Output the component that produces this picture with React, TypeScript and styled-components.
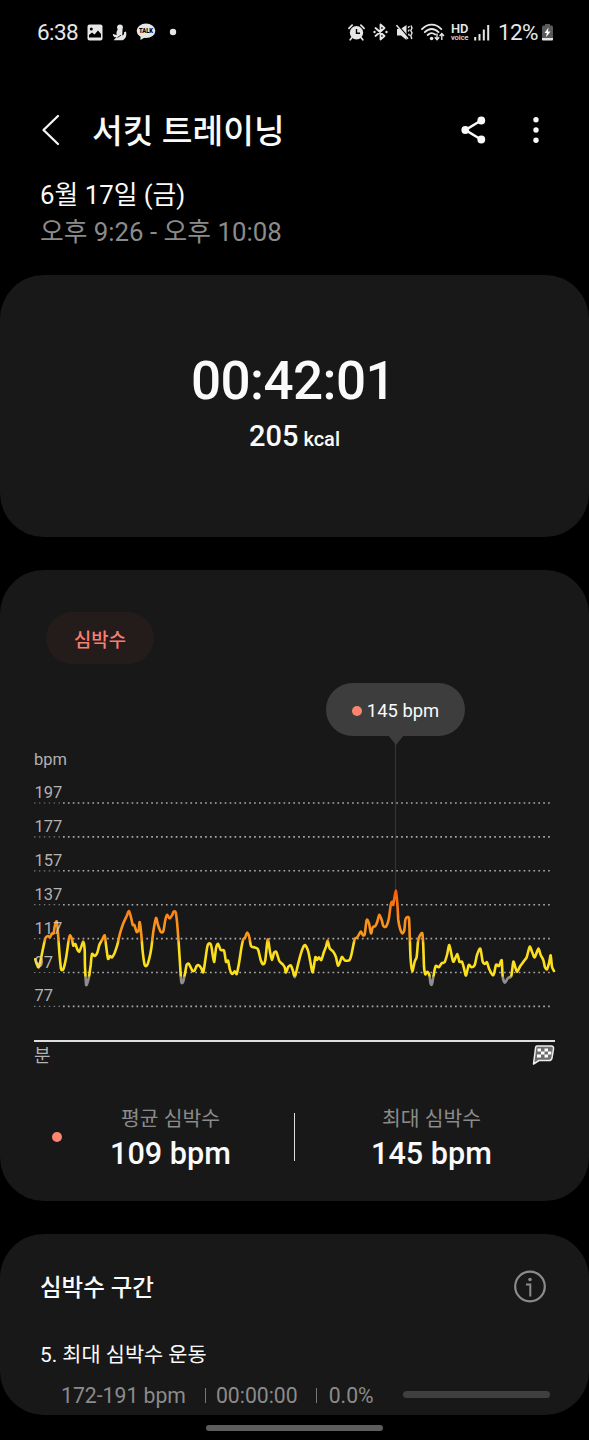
import React from "react";
import styled, { createGlobalStyle } from "styled-components";

const GlobalStyle = createGlobalStyle`
  * { box-sizing: border-box; }
  html, body { margin: 0; background: #000; }
  body { font-family: Roboto, "Noto Sans CJK KR", sans-serif; color: #fafafa; }
  svg { display: block; flex: none; }
`;

const Screen = styled.main`
  width: 589px;
  height: 1440px;
  overflow: hidden;
  background: #000;
  display: flex;
  flex-direction: column;
`;

const StatusBar = styled.header`
  height: 64px;
  padding: 0 36px 0 37px;
  display: flex;
  align-items: center;
  justify-content: space-between;
`;

const StatusGroup = styled.div<{ $gap: number }>`
  display: flex;
  align-items: center;
  gap: ${(p) => p.$gap}px;
`;

const StatusText = styled.span`
  font-size: 22.5px;
  line-height: 26px;
  color: #e6e6e6;
  letter-spacing: -0.6px;
`;

const HdVoice = styled.svg`
  margin: 0 -3px 0 -2px;
`;

const TitleBar = styled.div`
  height: 112px;
  padding: 20px 33px 0 41px;
  display: flex;
  align-items: center;
`;

const Title = styled.h1`
  margin: 0 auto 0 32px;
  padding-top: 4px;
  font-size: 33.4px;
  line-height: 40px;
  font-weight: 500;
  white-space: nowrap;
`;

const Actions = styled.div`
  display: flex;
  align-items: center;
  gap: 44px;
`;

const DateBlock = styled.div`
  height: 99px;
  padding: 1px 40px 0;
`;

const DateLine = styled.div<{ $muted?: boolean }>`
  font-size: 25.8px;
  line-height: 37px;
  color: ${(p) => (p.$muted ? "#8b8b8b" : "#fafafa")};
  white-space: nowrap;
`;

const Card = styled.section<{ $height: number }>`
  flex: none;
  height: ${(p) => p.$height}px;
  margin-bottom: 33px;
  border-radius: 44px;
  background: #181818;
  overflow: hidden;
`;

const SummaryCard = styled(Card)`
  display: flex;
  flex-direction: column;
  align-items: center;
  padding-top: 76px;
`;

const Duration = styled.div`
  font-size: 53px;
  line-height: 60px;
  font-weight: 500;
  letter-spacing: -0.6px;
  padding-right: 3px;
`;

const Calories = styled.div`
  margin-top: 7px;
  font-size: 29px;
  line-height: 36px;
  font-weight: 500;
`;

const Unit = styled.span`
  font-size: 20px;
  margin-left: 5px;
`;

const HeartCard = styled(Card)`
  display: flex;
  flex-direction: column;
`;

const Chip = styled.div`
  width: 108px;
  height: 52px;
  margin: 42px 0 0 46px;
  border-radius: 26px;
  background: #231c1b;
  color: #f77f6f;
  font-size: 18.8px;
  font-weight: 500;
  display: flex;
  align-items: center;
  justify-content: center;
`;

const Tooltip = styled.div`
  position: relative;
  width: 139px;
  height: 53px;
  margin: 19px 0 0 326px;
  border-radius: 27px;
  background: #3d3d3d;
  display: flex;
  align-items: center;
  justify-content: center;
  gap: 5px;
  font-size: 18.4px;
  padding-top: 2px;

  &::after {
    content: "";
    position: absolute;
    top: 52px;
    left: 62px;
    border: 8px solid transparent;
    border-top: 10px solid #3d3d3d;
    border-bottom: 0;
  }
`;

const Dot = styled.i`
  flex: none;
  width: 10px;
  height: 10px;
  border-radius: 50%;
  background: #fd8570;
`;

const ChartArea = styled.div`
  height: 341px;
  padding: 8px 0 0 34px;
`;

const Stats = styled.div`
  display: flex;
  align-items: center;
  height: 90px;
  margin-top: 15px;
  padding-left: 52px;
`;

const Stat = styled.div<{ $width: number; $gapAfter?: number }>`
  flex: none;
  width: ${(p) => p.$width}px;
  margin-right: ${(p) => p.$gapAfter ?? 0}px;
  padding-top: 3px;
  display: flex;
  flex-direction: column;
  align-items: center;
`;

const StatLabel = styled.span`
  font-size: 20.4px;
  line-height: 28px;
  color: #8b8b8b;
`;

const StatValue = styled.span`
  margin-top: 2px;
  font-size: 30.6px;
  line-height: 38px;
  font-weight: 500;
`;

const StatDivider = styled.i`
  flex: none;
  width: 1px;
  height: 48px;
  background: #dedede;
`;

const ZoneCard = styled(Card)`
  margin-bottom: 0;
  padding: 36px 39px 0 40px;
`;

const ZoneHeader = styled.div`
  display: flex;
  align-items: center;
  justify-content: space-between;
  height: 34px;
  padding-right: 4px;
`;

const ZoneTitle = styled.h2`
  margin: 0;
  padding-top: 2px;
  font-size: 23.5px;
  line-height: 34px;
  font-weight: 500;
`;

const ZoneName = styled.div`
  margin-top: 35px;
  font-size: 20.8px;
  line-height: 32px;
`;

const ZoneRow = styled.div`
  display: flex;
  align-items: center;
  height: 28px;
  margin-top: 11px;
  padding-left: 21px;
  font-size: 21.2px;
  line-height: 28px;
  color: #8b8b8b;
  white-space: nowrap;
`;

const ZoneDivider = styled.i<{ $left: number; $right: number }>`
  width: 1px;
  height: 15px;
  margin: 0 ${(p) => p.$right}px 2px ${(p) => p.$left}px;
  background: #777;
`;

const ZoneTrack = styled.i`
  width: 147px;
  height: 7px;
  margin: 0 0 3px auto;
  border-radius: 4px;
  background: #3f3f3f;
`;

const HomeHandle = styled.div`
  flex: none;
  width: 177px;
  height: 6px;
  margin: 10px auto 0;
  border-radius: 3px;
  background: #5d5d5d;
`;

const LIGHT = "#e6e6e6";

const GalleryIcon = () => (
  <svg width="16" height="17" viewBox="0 0 16 17">
    <rect x="0.5" y="0.5" width="15" height="16" rx="2" fill={LIGHT} />
    <circle cx="4.3" cy="5" r="1.5" fill="#000" />
    <path d="M2 13.5V11l3-2.5 2.5 2L11 6.5l3 3.5v3.5z" fill="#000" />
  </svg>
);

const FigureIcon = () => (
  <svg width="15" height="17" viewBox="0 0 15 17">
    <circle cx="8" cy="3.300" r="2.900" fill={LIGHT} />
    <path d="M6 5C4.300 7.500 4.200 9 4.800 11L0.800 10C0.800 12.500 2.500 13.500 4.500 13.300L1.500 16.300H10.500C13.800 14.800 15 11.500 14 7.500L12 8.200C12.300 10.300 11.500 11.300 10.300 11.500L10.500 5z" fill={LIGHT} />
    <path d="M5.500 13.500l3.500-2.300" stroke="#000" strokeWidth="0.800" />
  </svg>
);

const TalkIcon = () => (
  <svg width="20" height="18" viewBox="0 0 20 18">
    <ellipse cx="10" cy="7.800" rx="9.300" ry="7.300" fill={LIGHT} />
    <path d="M4.500 13v4l5-3z" fill={LIGHT} />
    <text x="10" y="10.400" textAnchor="middle" textLength="14" lengthAdjust="spacingAndGlyphs" fontSize="7" fontWeight="900" fill="#000">TALK</text>
  </svg>
);

const DotIcon = () => (
  <svg width="16" height="8" viewBox="0 0 16 8">
    <circle cx="8" cy="4" r="3.200" fill={LIGHT} />
  </svg>
);

const AlarmIcon = () => (
  <svg width="17" height="17" viewBox="0 0 17 17">
    <circle cx="8.500" cy="8.800" r="6.700" fill={LIGHT} />
    <path d="M0.900 4.300L4.100 1.200M16.100 4.300L12.900 1.200M4 13.500l-1.800 2.300M13 13.500l1.800 2.300" stroke={LIGHT} strokeWidth="1.700" strokeLinecap="round" />
    <path d="M8.500 5v4.200h3.500" fill="none" stroke="#000" strokeWidth="1.400" />
  </svg>
);

const BluetoothIcon = () => (
  <svg width="15" height="18" viewBox="0 0 15 18">
    <path d="M2.500 5l9 8L7.500 16.500V1.500L11.500 5l-9 8" fill="none" stroke={LIGHT} strokeWidth="1.800" strokeLinejoin="round" strokeLinecap="round" />
    <circle cx="1.500" cy="9" r="1.200" fill={LIGHT} />
    <circle cx="13.500" cy="9" r="1.200" fill={LIGHT} />
  </svg>
);

const MuteIcon = () => (
  <svg width="17" height="17" viewBox="0 0 17 17">
    <path d="M1 5h3.500L10.500 1v15l-5.500-4.500H1z" fill={LIGHT} />
    <path d="M1.500 0.800L12.500 13.500" stroke="#000" strokeWidth="1.300" />
    <path d="M0.500 1.200L12 14.800" stroke={LIGHT} strokeWidth="1.500" />
    <path d="M12 3.800l1.500-1.500 M12.300 7.500l1-2M12.500 9.800l1 2M15 1.500l1 2.500-1.200 2.500 1.200 2.500-1.200 2.500 1 3.500" fill="none" stroke={LIGHT} strokeWidth="1.400" />
  </svg>
);

const WifiIcon = () => (
  <svg width="24" height="18" viewBox="0 0 24 18">
    <path d="M1 6.200C6.500 0 14.800 0 20.300 6.200M3.800 9.200c4-4.300 9.700-4.300 13.700 0M6.700 12c2.300-2.300 5.200-2.300 7.500-.5" fill="none" stroke={LIGHT} strokeWidth="1.800" strokeLinecap="round" />
    <circle cx="10.600" cy="15.500" r="1.800" fill={LIGHT} />
    <path d="M16 10.500v6M13.800 14.300l2.200 2.400 2.200-2.400M20.800 17v-6.300M18.600 13l2.200-2.400L23 13" fill="none" stroke={LIGHT} strokeWidth="1.400" />
  </svg>
);

const HdVoiceIcon = () => (
  <HdVoice width="18" height="18" viewBox="0 0 18 18">
    <text x="0" y="9.500" textLength="17.500" lengthAdjust="spacingAndGlyphs" fontSize="12" fontWeight="600" fill={LIGHT}>HD</text>
    <text x="0" y="16.500" textLength="17.500" lengthAdjust="spacingAndGlyphs" fontSize="7.500" fontWeight="500" fill={LIGHT}>voice</text>
  </HdVoice>
);

const SignalIcon = () => (
  <svg width="16" height="17" viewBox="0 0 16 17">
    <path d="M1.200 16.500v-3.500M5.500 16.500v-6.500M9.800 16.500V5.500M14.200 16.500V1" stroke={LIGHT} strokeWidth="2" />
  </svg>
);

const BatteryIcon = () => (
  <svg width="11" height="17" viewBox="0 0 11 17">
    <path d="M3 0h5v1.500h1.500q1.500 0 1.500 1.500v11H0V3q0-1.500 1.500-1.500H3z" fill="#5a5a5a" />
    <path d="M0 14h11v1.500q0 1-1 1H1q-1 0-1-1z" fill={LIGHT} />
    <path d="M6.500 3.500L2.500 9h2.300L4 13.200 8.500 7.500H6z" fill="#fff" />
  </svg>
);

const BackIcon = () => (
  <svg width="19" height="32" viewBox="0 0 19 32">
    <path d="M17 2L2.500 16 17 30" fill="none" stroke="#f5f5f5" strokeWidth="2.300" strokeLinecap="round" strokeLinejoin="round" />
  </svg>
);

const ShareIcon = () => (
  <svg width="25" height="28" viewBox="0 0 25 28">
    <path d="M20 4.500L4.500 14 20 23.500" fill="none" stroke="#fafafa" strokeWidth="2.600" />
    <circle cx="20.300" cy="4.500" r="3.900" fill="#fafafa" />
    <circle cx="4.300" cy="14" r="3.900" fill="#fafafa" />
    <circle cx="20.300" cy="23.500" r="3.900" fill="#fafafa" />
  </svg>
);

const MoreIcon = () => (
  <svg width="26" height="28" viewBox="0 0 26 28">
    <circle cx="6" cy="3.700" r="2.700" fill="#fafafa" />
    <circle cx="6" cy="14" r="2.700" fill="#fafafa" />
    <circle cx="6" cy="24.300" r="2.700" fill="#fafafa" />
  </svg>
);

const InfoIcon = () => (
  <svg width="32" height="34" viewBox="0 0 32 34">
    <circle cx="16" cy="16.500" r="14.800" fill="none" stroke="#8b8b8b" strokeWidth="2.200" />
    <circle cx="16" cy="9.500" r="1.800" fill="#8b8b8b" />
    <path d="M12 14.500h4.300V26.500" fill="none" stroke="#8b8b8b" strokeWidth="2" />
  </svg>
);

/* Heart-rate samples as [x, y] on a grid three times finer than the plot. */
const samples: [number, number][] = [
  [46,238],[50,252],[56,262],[62,240],[68,210],[76,175],[84,168],[90,172],[96,160],[101,160],[104,140],[110,124],[114,160],[118,215],
  [123,266],[130,268],[138,235],[146,180],[150,166],[156,178],[160,197],[166,192],[172,208],[178,215],[184,200],[190,185],
  [194,210],[195,260],[198,312],[201,312],[207,290],[212,255],[216,222],[224,228],[232,218],[238,195],[246,180],[254,166],
  [258,195],[264,236],[270,228],[276,232],[284,218],[292,195],[300,160],[310,130],[320,108],[327,93],[333,112],[338,135],
  [343,135],[350,156],[356,150],[359,126],[364,165],[368,215],[374,255],[381,256],[388,235],[394,205],[400,155],[408,114],
  [414,135],[422,155],[430,154],[436,120],[442,104],[448,115],[456,106],[461,95],[467,97],[471,125],[476,190],[480,250],
  [484,306],[490,304],[496,275],[500,254],[507,252],[517,272],[524,271],[530,258],[537,256],[544,265],[550,277],[556,240],
  [562,200],[568,190],[574,198],[582,246],[588,205],[594,191],[602,210],[612,212],[618,245],[624,242],[630,270],[637,282],
  [644,274],[650,282],[656,255],[664,205],[670,178],[676,172],[681,158],[687,168],[693,198],[702,202],[714,208],[722,240],
  [730,253],[736,240],[743,178],[750,215],[756,240],[762,218],[769,216],[778,243],[788,253],[794,262],[798,278],[804,262],
  [812,256],[818,270],[824,292],[830,270],[840,230],[848,205],[855,195],[864,212],[871,245],[878,277],[886,232],[891,240],
  [897,232],[904,240],[912,215],[918,200],[923,182],[929,205],[940,215],[948,232],[954,257],[962,240],[966,230],[974,241],
  [988,241],[994,225],[1004,178],[1012,172],[1022,155],[1028,165],[1034,163],[1040,120],[1047,130],[1053,160],[1058,142],
  [1066,138],[1072,125],[1078,104],[1085,120],[1090,138],[1098,140],[1106,118],[1112,75],[1116,65],[1120,74],[1127,32],
  [1132,70],[1135,120],[1140,145],[1147,160],[1153,150],[1156,120],[1161,112],[1167,115],[1169,165],[1172,240],[1177,274],
  [1184,245],[1190,230],[1194,185],[1198,170],[1207,160],[1210,200],[1212,260],[1216,283],[1222,275],[1228,285],[1232,312],
  [1236,312],[1241,285],[1247,258],[1256,262],[1265,250],[1274,246],[1281,225],[1288,195],[1296,232],[1301,245],[1312,222],
  [1318,245],[1326,245],[1332,265],[1338,287],[1346,255],[1354,262],[1364,255],[1371,225],[1381,206],[1388,245],[1394,252],
  [1401,247],[1408,268],[1420,286],[1428,255],[1437,258],[1445,241],[1448,290],[1455,308],[1463,295],[1474,288],[1480,245],
  [1486,262],[1491,275],[1501,258],[1512,243],[1520,232],[1529,200],[1536,215],[1544,232],[1555,206],[1562,225],[1570,240],
  [1575,262],[1581,268],[1587,250],[1592,226],[1596,260],[1602,273],
];

const points = samples.map(([x, y]) => [x / 3 - 14, y / 3 + 136]);

const linePath = points.reduce((d, p, i) => {
  if (i === 0) return `M${p[0].toFixed(1)} ${p[1].toFixed(1)}`;
  const a = points[Math.max(0, i - 2)];
  const b = points[i - 1];
  const c = points[Math.min(points.length - 1, i + 1)];
  const k = 8;
  return `${d}C${[
    b[0] + (p[0] - a[0]) / k, b[1] + (p[1] - a[1]) / k,
    p[0] - (c[0] - b[0]) / k, p[1] - (c[1] - b[1]) / k,
    p[0], p[1],
  ].map((n) => n.toFixed(1)).join(" ")}`;
}, "");

const levels = [197, 177, 157, 137, 117, 97, 77];

const HeartChart = () => (
  <svg width="522" height="333" viewBox="0 0 522 333">
    <defs>
      <linearGradient id="bpm" gradientUnits="userSpaceOnUse" x1="0" y1="146" x2="0" y2="246">
        <stop offset="0" stopColor="#fb5a08" />
        <stop offset="0.15" stopColor="#fb7412" />
        <stop offset="0.3" stopColor="#f98f1c" />
        <stop offset="0.5" stopColor="#f99a1c" />
        <stop offset="0.53" stopColor="#fbdc1c" />
        <stop offset="0.86" stopColor="#fde21a" />
        <stop offset="0.87" stopColor="#8e8e8e" />
        <stop offset="1" stopColor="#8e8e8e" />
      </linearGradient>
    </defs>
    <path d="M361.500 0V146" stroke="#343434" strokeWidth="1.200" />
    {levels.map((level, i) => (
      <g key={level}>
        <path d={`M0 ${59 + i * 33.9}h28`} stroke="#777" strokeWidth="1.200" strokeDasharray="1.500 3.400" />
        <path d={`M29 ${59 + i * 33.9}h489`} stroke="#a8a8a8" strokeWidth="1.600" strokeDasharray="1.700 3.200" />
      </g>
    ))}
    <path d={linePath} fill="none" stroke="url(#bpm)" strokeWidth="2.600" strokeLinejoin="round" strokeLinecap="round" />
    <g fill="#d0d0d0" fillOpacity="0.85" fontSize="16.500">
      <text x="0" y="21">bpm</text>
      {levels.map((level, i) => (
        <text key={level} x="0.500" y={54 + i * 33.9}>{level}</text>
      ))}
      <text x="0" y="318" fontSize="18">분</text>
    </g>
    <path d="M0 297h521" stroke="#dedede" strokeWidth="2" />
    <g transform="translate(498 300.500)">
      <path d="M5 1.500h14q3 0 2.500 3l-1.500 9q-.5 2.500-3 2.500H7L1.500 19.500 3.500 4Q3.700 1.500 5 1.500z" fill="#6e6e6e" stroke="#ededed" strokeWidth="1.500" strokeLinejoin="round" />
      <path d="M5.500 4h3.500v3H5.500zM12.500 4H16v3h-3.500zM9 7h3.500v3H9zM16 7h3.300v3H16zM5 10h4v3H5zM12.500 10H16v3h-3.500z" fill="#fff" />
    </g>
  </svg>
);

export default function App() {
  return (
    <Screen>
      <GlobalStyle />
      <StatusBar>
        <StatusGroup $gap={9}>
          <StatusText>6:38</StatusText>
          <GalleryIcon />
          <FigureIcon />
          <TalkIcon />
          <DotIcon />
        </StatusGroup>
        <StatusGroup $gap={8}>
          <AlarmIcon />
          <BluetoothIcon />
          <MuteIcon />
          <WifiIcon />
          <HdVoiceIcon />
          <SignalIcon />
          <StatusGroup $gap={4}>
            <StatusText>12%</StatusText>
            <BatteryIcon />
          </StatusGroup>
        </StatusGroup>
      </StatusBar>

      <TitleBar>
        <BackIcon />
        <Title>서킷 트레이닝</Title>
        <Actions>
          <ShareIcon />
          <MoreIcon />
        </Actions>
      </TitleBar>

      <DateBlock>
        <DateLine>6월 17일 (금)</DateLine>
        <DateLine $muted>오후 9:26 - 오후 10:08</DateLine>
      </DateBlock>

      <SummaryCard $height={262}>
        <Duration>00:42:01</Duration>
        <Calories>205<Unit>kcal</Unit></Calories>
      </SummaryCard>

      <HeartCard $height={631}>
        <Chip>심박수</Chip>
        <Tooltip><Dot />145 bpm</Tooltip>
        <ChartArea><HeartChart /></ChartArea>
        <Stats>
          <Dot />
          <Stat $width={217} $gapAfter={15}>
            <StatLabel>평균 심박수</StatLabel>
            <StatValue>109 bpm</StatValue>
          </Stat>
          <StatDivider />
          <Stat $width={273}>
            <StatLabel>최대 심박수</StatLabel>
            <StatValue>145 bpm</StatValue>
          </Stat>
        </Stats>
      </HeartCard>

      <ZoneCard $height={181}>
        <ZoneHeader>
          <ZoneTitle>심박수 구간</ZoneTitle>
          <InfoIcon />
        </ZoneHeader>
        <ZoneName>5. 최대 심박수 운동</ZoneName>
        <ZoneRow>
          172-191 bpm
          <ZoneDivider $left={19} $right={10} />
          00:00:00
          <ZoneDivider $left={18} $right={12} />
          0.0%
          <ZoneTrack />
        </ZoneRow>
      </ZoneCard>
      <HomeHandle />
    </Screen>
  );
}
